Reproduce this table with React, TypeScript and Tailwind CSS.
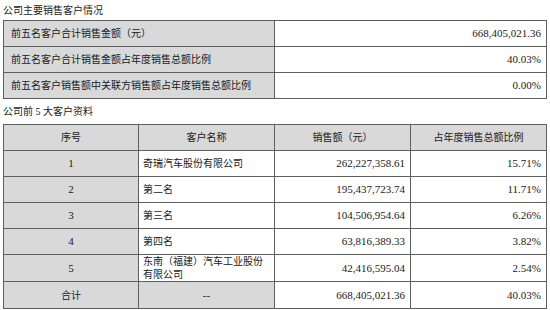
import React from 'react';

const summary = [
  { label: '前五名客户合计销售金额（元）', value: '668,405,021.36' },
  { label: '前五名客户合计销售金额占年度销售总额比例', value: '40.03%' },
  { label: '前五名客户销售额中关联方销售额占年度销售总额比例', value: '0.00%' },
];

const customers = [
  { no: '1', name: '奇瑞汽车股份有限公司', amount: '262,227,358.61', ratio: '15.71%' },
  { no: '2', name: '第二名', amount: '195,437,723.74', ratio: '11.71%' },
  { no: '3', name: '第三名', amount: '104,506,954.64', ratio: '6.26%' },
  { no: '4', name: '第四名', amount: '63,816,389.33', ratio: '3.82%' },
  { no: '5', name: '东南（福建）汽车工业股份有限公司', amount: '42,416,595.04', ratio: '2.54%' },
];

const cell = 'border border-[#5f5f5f] align-middle';
const gray = 'bg-[#d9d9d9]';

export default function App() {
  return (
    <div
      className="w-[550px] h-[310px] bg-white pl-[3px] text-[#1a1a1a]"
      style={{ fontFamily: '"Liberation Serif", "Noto Sans CJK SC", serif' }}
    >
      <div className="h-[20px] pt-[3px] text-[10px] leading-[15px]">公司主要销售客户情况</div>
      <table className="w-[543px] table-fixed border-collapse">
        <colgroup>
          <col className="w-[271px]" />
          <col className="w-[272px]" />
        </colgroup>
        <tbody>
          {summary.map((row) => (
            <tr key={row.label} className="h-[26px]">
              <td className={`${cell} ${gray} pl-[7px] text-[10px]`}>{row.label}</td>
              <td className={`${cell} pr-[5px] text-right text-[11px]`}>{row.value}</td>
            </tr>
          ))}
        </tbody>
      </table>

      <div className="h-[25px] pt-[5px] text-[10px] leading-[15px]">公司前 5 大客户资料</div>
      <table className="w-[543px] table-fixed border-collapse">
        <colgroup>
          <col className="w-[135px]" />
          <col className="w-[136px]" />
          <col className="w-[136px]" />
          <col className="w-[136px]" />
        </colgroup>
        <thead>
          <tr className={`h-[26px] ${gray}`}>
            <th className={`${cell} font-normal text-[10px] text-center`}>序号</th>
            <th className={`${cell} font-normal text-[10px] text-center`}>客户名称</th>
            <th className={`${cell} font-normal text-[10px] text-center`}>销售额（元）</th>
            <th className={`${cell} font-normal text-[10px] text-center`}>占年度销售总额比例</th>
          </tr>
        </thead>
        <tbody>
          {customers.map((c) => (
            <tr key={c.no} className={c.no === '5' ? 'h-[27px]' : 'h-[26px]'}>
              <td className={`${cell} ${gray} text-center text-[11px]`}>{c.no}</td>
              <td className={`${cell} px-[4px] text-[10px] leading-[13px]`}>{c.name}</td>
              <td className={`${cell} pr-[5px] text-right text-[11px]`}>{c.amount}</td>
              <td className={`${cell} pr-[5px] text-right text-[11px]`}>{c.ratio}</td>
            </tr>
          ))}
          <tr className="h-[27px]">
            <td className={`${cell} ${gray} text-center text-[10px]`}>合计</td>
            <td className={`${cell} ${gray} text-center text-[11px]`}>--</td>
            <td className={`${cell} pr-[5px] text-right text-[11px]`}>668,405,021.36</td>
            <td className={`${cell} pr-[5px] text-right text-[11px]`}>40.03%</td>
          </tr>
        </tbody>
      </table>
    </div>
  );
}
